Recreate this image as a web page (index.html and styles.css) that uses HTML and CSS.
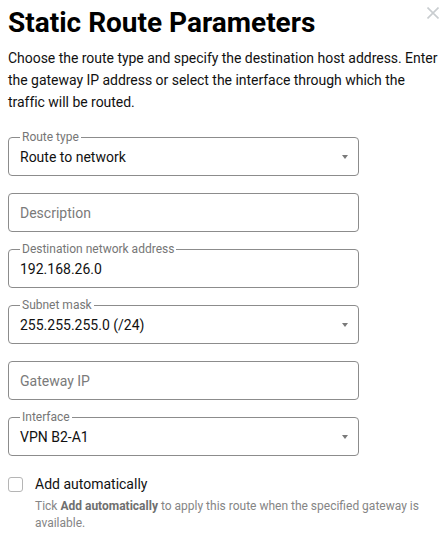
FILE: index.html
```html
<!DOCTYPE html>
<html>
<head>
<meta charset="utf-8">
<link rel="stylesheet" href="styles.css">
</head>
<body>
<div class="dialog">
  <div class="header">
    <h1 class="title">Static Route Parameters</h1>
    <button class="close" aria-label="Close">
      <svg width="12" height="12" viewBox="0 0 12 12"><path d="M0.5 0.5 L11.5 11.5 M11.5 0.5 L0.5 11.5" stroke="#c9cdd0" stroke-width="1.6" fill="none"/></svg>
    </button>
  </div>
  <p class="intro">Choose the route type and specify the destination host address. Enter the gateway IP address or select the interface through which the traffic will be routed.</p>
  <div class="form">
    <div class="field select">
      <span class="label">Route type</span>
      <span class="value">Route to network</span>
      <span class="arrow"></span>
    </div>
    <div class="field">
      <span class="placeholder">Description</span>
    </div>
    <div class="field">
      <span class="label">Destination network address</span>
      <span class="value">192.168.26.0</span>
    </div>
    <div class="field select">
      <span class="label">Subnet mask</span>
      <span class="value">255.255.255.0 (/24)</span>
      <span class="arrow"></span>
    </div>
    <div class="field">
      <span class="placeholder">Gateway IP</span>
    </div>
    <div class="field select">
      <span class="label">Interface</span>
      <span class="value">VPN B2-A1</span>
      <span class="arrow"></span>
    </div>
  </div>
  <div class="check-row">
    <span class="checkbox"></span>
    <div class="check-text">
      <div class="check-label">Add automatically</div>
      <div class="help">Tick <b>Add automatically</b> to apply this route when the specified gateway is available.</div>
    </div>
  </div>
</div>
</body>
</html>
```
FILE: styles.css
```css
html, body {
  margin: 0;
  padding: 0;
  background: #ffffff;
}
body {
  font-family: Roboto, "Liberation Sans", sans-serif;
  color: #111111;
}
.dialog {
  padding: 6px 8px 0 8px;
}
.header {
  display: flex;
  justify-content: space-between;
  align-items: flex-start;
}
.title {
  margin: 0;
  font-size: 28px;
  line-height: 33px;
  font-weight: 700;
  color: #000;
}
.close {
  border: none;
  background: none;
  padding: 0;
  margin: 1px -2px 0 0;
  width: 12px;
  height: 12px;
  display: block;
}
.close svg { display: block; }
.intro {
  margin: 8px -6px 0 0;
  font-size: 14px;
  line-height: 22px;
  letter-spacing: -0.03px;
  color: #111;
}
.form {
  margin-top: 24px;
  width: 351px;
  display: flex;
  flex-direction: column;
  gap: 17px;
}
.field {
  position: relative;
  height: 39px;
  box-sizing: border-box;
  border: 1px solid #8c8c8c;
  border-radius: 4px;
  display: flex;
  align-items: center;
  padding: 0 12px 0 11px;
  font-size: 14px;
}
.label {
  position: absolute;
  top: -8px;
  left: 11px;
  padding: 0 2px;
  background: #fff;
  font-size: 12px;
  line-height: 14px;
  color: #767676;
}
.value {
  flex: 1;
  color: #111;
}
.placeholder {
  flex: 1;
  color: #7a7a7a;
}
.arrow {
  width: 0;
  height: 0;
  border-left: 3px solid transparent;
  border-right: 3px solid transparent;
  border-top: 4px solid #7a7a7a;
  margin-right: -2px;
}
.check-row {
  display: flex;
  margin-top: 20px;
  gap: 12px;
}
.checkbox {
  width: 15px;
  height: 15px;
  box-sizing: border-box;
  border: 1px solid #b5b5b5;
  border-radius: 3px;
  margin-top: 1px;
  flex: none;
}
.check-label {
  font-size: 14px;
  line-height: 17px;
  color: #111;
}
.help {
  margin-top: 5px;
  font-size: 12px;
  line-height: 17px;
  color: #858585;
}
.help b {
  font-weight: 700;
  color: #6f6f6f;
}
```
